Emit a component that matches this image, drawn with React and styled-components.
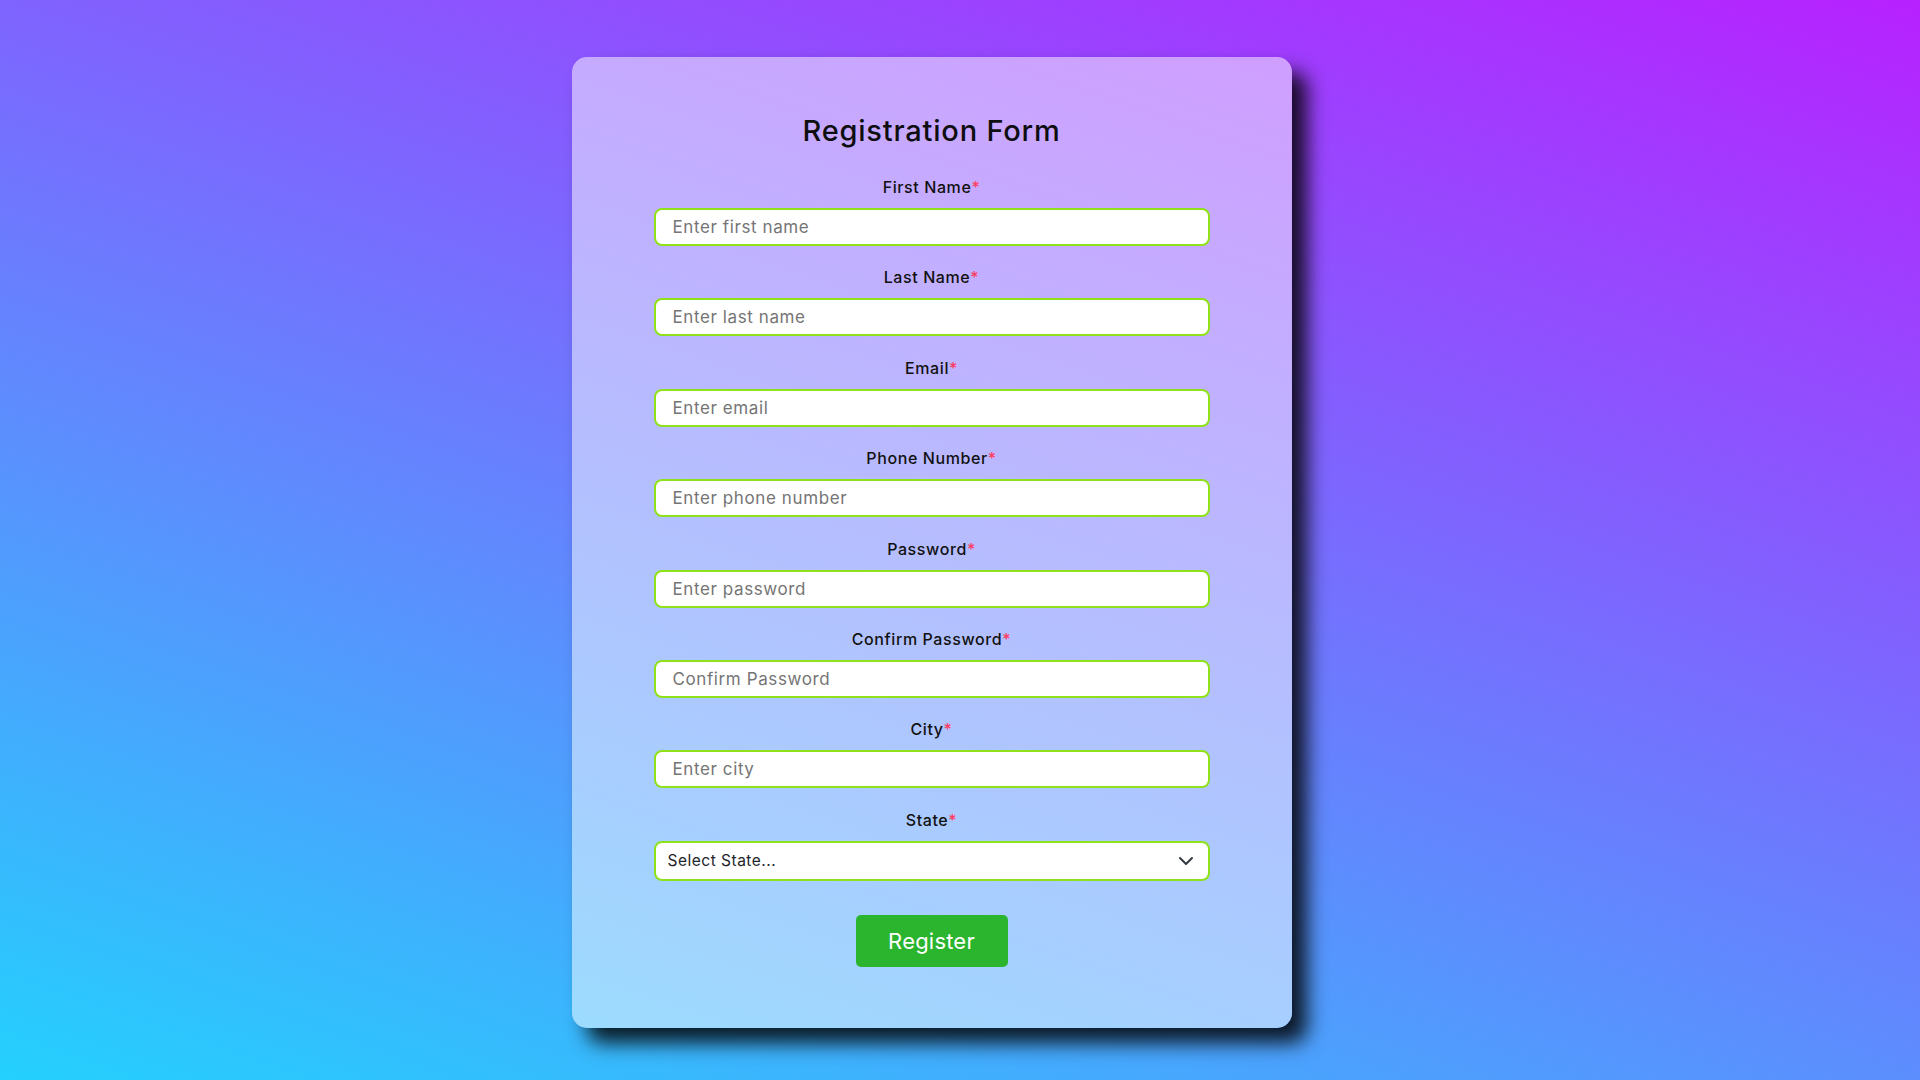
import React from "react";
import styled, { createGlobalStyle } from "styled-components";

const GlobalStyle = createGlobalStyle`
  html, body {
    margin: 0;
    padding: 0;
  }
  body {
    font-family: "Inter", "Noto Sans", sans-serif;
  }
  * { box-sizing: border-box; }
`;

const Page = styled.div`
  padding: 57px 0 87px;
  background-image: linear-gradient(19deg, #21d4fd 0%, #b721ff 100%);
`;

const Card = styled.form`
  margin-left: calc((100% - 15px) * 0.3);
  width: 720px;
  padding: 56px 82px 61px;
  background: rgba(255, 255, 255, 0.5);
  border-radius: 15px;
  box-shadow: 15px 15px 20px rgba(0, 0, 0, 0.85);
  display: flex;
  flex-direction: column;
  align-items: center;
`;

const Title = styled.h1`
  margin: 0 0 26px;
  font-size: 29px;
  line-height: 36px;
  font-weight: 500;
  color: #0e0e10;
  letter-spacing: 0.8px;
`;

const Fields = styled.div`
  width: 100%;
  display: flex;
  flex-direction: column;
  gap: 19.4px;
`;

const Field = styled.div`
  display: flex;
  flex-direction: column;
  align-items: center;
  gap: 9px;
`;

const Label = styled.label`
  font-size: 16px;
  line-height: 24px;
  font-weight: 500;
  color: #111;
  letter-spacing: 0.6px;
`;

const Req = styled.span`
  color: #ff3b5f;
`;

const Input = styled.input`
  width: 100%;
  height: 38px;
  border: 2px solid #8fe21a;
  border-radius: 8px;
  padding: 0 17px;
  background: #fff;
  font-family: inherit;
  font-size: 17px;
  letter-spacing: 0.6px;
  color: #222;
  outline: none;
  &::placeholder {
    color: #757575;
  }
`;

const SelectWrap = styled.div`
  position: relative;
  width: 100%;
`;

const Select = styled.select`
  width: 100%;
  height: 40px;
  appearance: none;
  -webkit-appearance: none;
  border: 2px solid #8fe21a;
  border-radius: 8px;
  padding: 0 36px 0 12px;
  background: #fff;
  font-family: inherit;
  font-size: 15.5px;
  letter-spacing: 0.5px;
  color: #212529;
  outline: none;
`;

const Chevron = styled.svg`
  position: absolute;
  right: 16px;
  top: 50%;
  transform: translateY(-50%);
  pointer-events: none;
`;

const Button = styled.button`
  margin-top: 34px;
  width: 152px;
  height: 52px;
  border: none;
  border-radius: 5px;
  background: #2bb52e;
  color: #fff;
  font-family: inherit;
  font-size: 22px;
  font-weight: 400;
  letter-spacing: 0.2px;
  cursor: pointer;
`;

const fields = [
  { label: "First Name", placeholder: "Enter first name", type: "text" },
  { label: "Last Name", placeholder: "Enter last name", type: "text" },
  { label: "Email", placeholder: "Enter email", type: "email" },
  { label: "Phone Number", placeholder: "Enter phone number", type: "tel" },
  { label: "Password", placeholder: "Enter password", type: "password" },
  { label: "Confirm Password", placeholder: "Confirm Password", type: "password" },
  { label: "City", placeholder: "Enter city", type: "text" },
];

export default function App() {
  return (
    <>
      <GlobalStyle />
      <Page>
        <Card onSubmit={(e) => e.preventDefault()}>
          <Title>Registration Form</Title>
          <Fields>
            {fields.map((f) => (
              <Field key={f.label}>
                <Label>
                  {f.label}
                  <Req>*</Req>
                </Label>
                <Input type={f.type} placeholder={f.placeholder} />
              </Field>
            ))}
            <Field>
              <Label>
                State<Req>*</Req>
              </Label>
              <SelectWrap>
                <Select defaultValue="">
                  <option value="">Select State...</option>
                  <option>Maharashtra</option>
                  <option>Karnataka</option>
                  <option>Gujarat</option>
                </Select>
                <Chevron width="16" height="16" viewBox="0 0 16 16">
                  <path
                    d="M2 5l6 6 6-6"
                    fill="none"
                    stroke="#343a40"
                    strokeWidth="2"
                    strokeLinecap="round"
                    strokeLinejoin="round"
                  />
                </Chevron>
              </SelectWrap>
            </Field>
          </Fields>
          <Button type="submit">Register</Button>
        </Card>
      </Page>
    </>
  );
}
